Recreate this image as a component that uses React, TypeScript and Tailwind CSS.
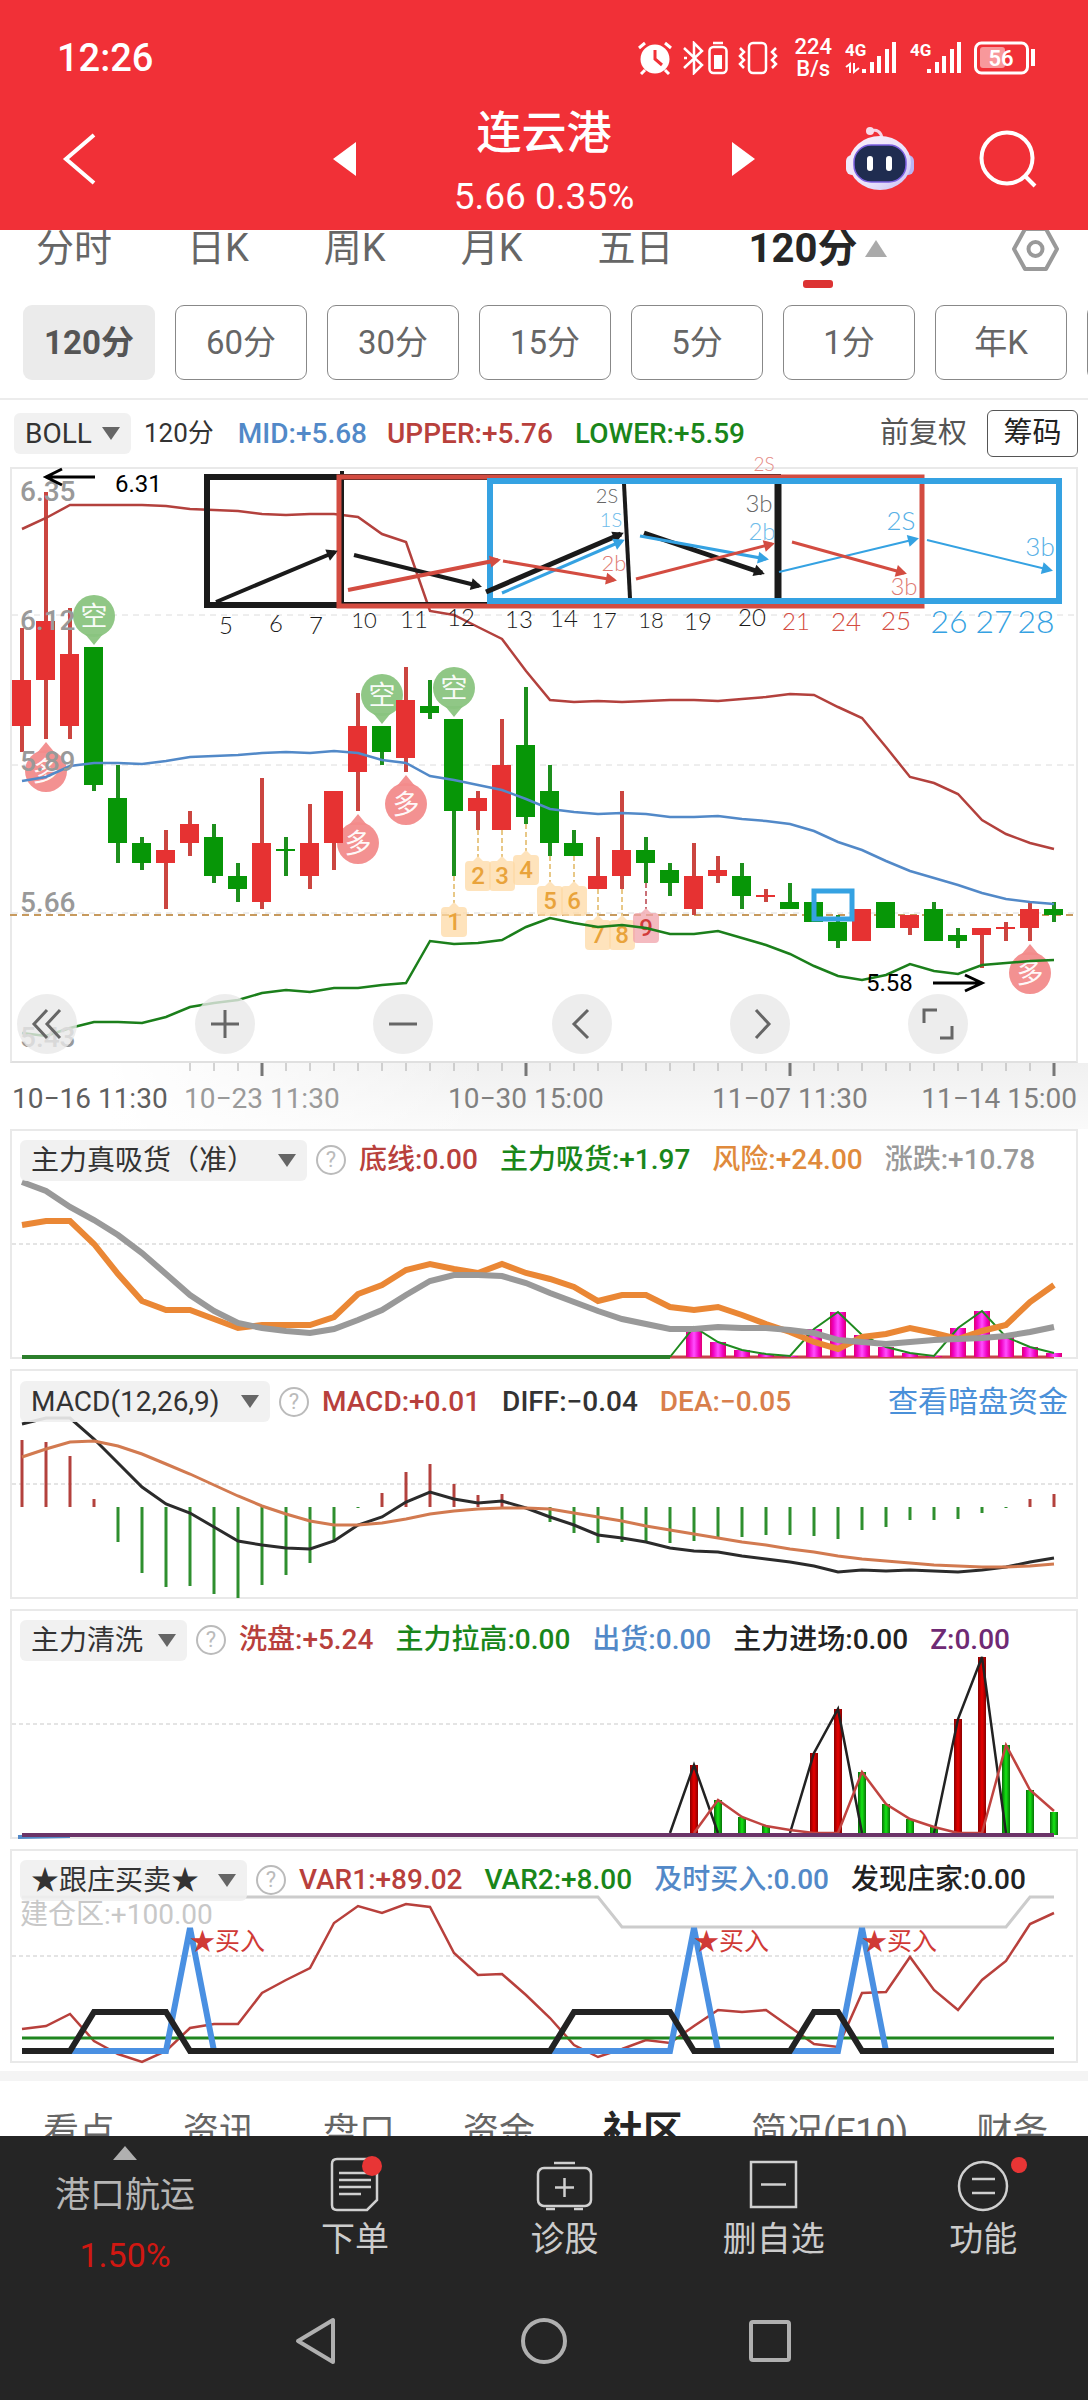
import React from "react";

const STEP = 24;
const FIRST_X = 22;
const toX = (i: number) => FIRST_X + i * STEP;
const line = (ys: number[], start = 0) => ys.map((y, i) => `${toX(i + start)},${y}`).join(" ");

// [direction, body top, body bottom, high, low]
type Candle = ["up" | "down", number, number, number, number];

const CANDLES: Candle[] = [
  ["up", 680, 726, 628, 752],
  ["up", 621, 680, 492, 739],
  ["up", 654, 726, 608, 739],
  ["down", 647, 785, 647, 791],
  ["down", 798, 843, 765, 863],
  ["down", 843, 863, 837, 870],
  ["up", 850, 863, 830, 909],
  ["up", 824, 843, 811, 856],
  ["down", 837, 876, 824, 883],
  ["down", 876, 889, 863, 902],
  ["up", 843, 902, 778, 909],
  ["down", 849, 851, 837, 876],
  ["up", 843, 876, 804, 889],
  ["up", 791, 843, 791, 870],
  ["up", 726, 772, 693, 811],
  ["down", 726, 752, 726, 765],
  ["up", 700, 758, 667, 772],
  ["down", 706, 713, 680, 719],
  ["down", 719, 811, 719, 876],
  ["up", 798, 811, 791, 830],
  ["up", 765, 830, 719, 830],
  ["down", 745, 817, 687, 824],
  ["down", 791, 843, 765, 856],
  ["down", 843, 856, 830, 856],
  ["up", 876, 889, 837, 889],
  ["up", 850, 876, 791, 889],
  ["down", 850, 863, 837, 883],
  ["down", 870, 883, 863, 896],
  ["up", 876, 909, 843, 915],
  ["up", 870, 876, 856, 883],
  ["down", 876, 896, 863, 909],
  ["up", 895, 897, 889, 902],
  ["down", 902, 909, 883, 909],
  ["down", 902, 922, 902, 922],
  ["down", 922, 941, 915, 948],
  ["up", 909, 941, 909, 941],
  ["down", 902, 928, 902, 928],
  ["up", 915, 928, 915, 935],
  ["down", 909, 941, 902, 941],
  ["down", 935, 941, 928, 948],
  ["up", 928, 935, 928, 968],
  ["up", 927, 929, 922, 941],
  ["up", 909, 928, 902, 941],
  ["down", 909, 915, 902, 922],
];

const UPPER = [529, 518, 505, 505, 505, 505, 506, 509, 510, 511, 514, 515, 514, 514, 517, 534, 542, 611, 615, 627, 639, 671, 700, 702, 701, 702, 701, 700, 700, 701, 699, 697, 694, 695, 707, 718, 747, 777, 783, 794, 820, 834, 843, 849];
const MID = [781, 777, 766, 763, 763, 764, 761, 757, 756, 755, 753, 752, 753, 751, 753, 760, 763, 776, 780, 785, 790, 799, 809, 812, 814, 813, 814, 817, 817, 816, 819, 821, 824, 831, 842, 850, 861, 871, 878, 885, 893, 899, 902, 904];
const LOWER = [1033, 1036, 1028, 1022, 1022, 1023, 1017, 1007, 1003, 1000, 993, 990, 992, 988, 988, 985, 983, 941, 944, 943, 940, 927, 918, 923, 927, 925, 928, 934, 934, 931, 938, 945, 954, 966, 976, 980, 975, 964, 971, 974, 965, 963, 961, 960];

const BEARS = [[94, 616], [382, 695], [454, 688]];
const BULLS = [[46, 771], [358, 843], [406, 804], [1030, 973]];

// [candle index, box top]
const COUNTS = [[18, 907], [19, 861], [20, 861], [21, 855], [22, 886], [23, 886], [24, 920], [25, 920], [26, 913]];

const TREND = [1182, 1191, 1207, 1220, 1235, 1253, 1274, 1295, 1311, 1323, 1328, 1331, 1333, 1329, 1320, 1310, 1295, 1281, 1275, 1275, 1276, 1283, 1293, 1302, 1311, 1319, 1324, 1329, 1329, 1327, 1328, 1328, 1330, 1333, 1340, 1342, 1344, 1342, 1340, 1339, 1338, 1336, 1332, 1327];
const RISK = [1225, 1221, 1221, 1244, 1274, 1301, 1310, 1310, 1319, 1328, 1325, 1325, 1325, 1317, 1294, 1285, 1270, 1264, 1269, 1273, 1264, 1273, 1279, 1287, 1301, 1295, 1295, 1307, 1310, 1307, 1315, 1324, 1332, 1342, 1349, 1337, 1334, 1328, 1333, 1339, 1331, 1325, 1302, 1285];
const INFLOW = [1357, 1327, 1342, 1350, 1354, 1356, 1329, 1312, 1335, 1347, 1353, 1356, 1328, 1311, 1337, 1347, 1353];

const MACD = [1440, 1442, 1456, 1499, 1542, 1573, 1587, 1586, 1594, 1598, 1585, 1575, 1563, 1542, 1508, 1493, 1472, 1464, 1484, 1495, 1494, 1507, 1522, 1533, 1543, 1542, 1543, 1543, 1541, 1537, 1537, 1535, 1535, 1536, 1539, 1530, 1527, 1520, 1520, 1519, 1513, 1508, 1499, 1494];
const DIFF = [1424, 1418, 1418, 1439, 1463, 1487, 1504, 1513, 1527, 1541, 1545, 1548, 1549, 1541, 1525, 1517, 1502, 1492, 1499, 1503, 1501, 1508, 1517, 1525, 1535, 1538, 1542, 1548, 1551, 1552, 1556, 1559, 1562, 1566, 1572, 1570, 1571, 1570, 1571, 1572, 1570, 1567, 1562, 1558];
const DEA = [1457, 1449, 1442, 1441, 1446, 1454, 1464, 1474, 1485, 1496, 1506, 1514, 1521, 1525, 1525, 1523, 1519, 1514, 1511, 1509, 1508, 1508, 1509, 1513, 1517, 1521, 1526, 1530, 1534, 1538, 1542, 1545, 1549, 1552, 1556, 1559, 1561, 1563, 1565, 1566, 1567, 1567, 1566, 1564];

const WASH_RED = [[28, 1765], [33, 1753], [34, 1709], [39, 1719], [40, 1657]];
const WASH_GREEN = [[29, 1800], [30, 1817], [31, 1826], [35, 1772], [36, 1804], [37, 1819], [38, 1827], [41, 1745], [42, 1790], [43, 1812]];

const VAR1 = [2029, 2026, 2014, 2041, 2054, 2062, 2051, 2028, 2024, 2024, 1993, 1980, 1968, 1923, 1906, 1913, 1904, 1907, 1953, 1975, 1974, 1995, 2018, 2045, 2057, 2049, 2040, 2043, 2026, 2010, 2012, 2010, 2027, 2044, 2047, 1993, 1992, 1957, 1990, 2010, 1980, 1961, 1924, 1913];
const DEALER = [0, 0, 0, 1, 1, 1, 1, 0, 0, 0, 0, 0, 0, 0, 0, 0, 0, 0, 0, 0, 0, 0, 0, 1, 1, 1, 1, 1, 0, 0, 0, 0, 0, 1, 1, 0, 0, 0, 0, 0, 0, 0, 0, 0].map((on) => (on ? 2012 : 2051));

function StatusBar() {
  return (
    <div className="flex h-[104px] items-center justify-between pt-3 pr-[52px] pl-[57px]">
      <span className="text-[38px] leading-none font-medium">12:26</span>
      <div className="flex items-center">
        <svg width="34" height="34" viewBox="0 0 34 34" fill="none" stroke="#fff" strokeWidth="3">
          <circle cx="17" cy="18" r="14.5" fill="#fff" stroke="none" />
          <path d="M1 7l6-5M33 7l-6-5M7 29l-4 4M27 29l4 4" />
          <path d="M17 9v9l7 6" stroke="#f13037" />
        </svg>
        <svg className="ml-[11px]" width="46" height="34" viewBox="0 0 46 34" fill="none" stroke="#fff" strokeWidth="2.5">
          <path d="M1 7l18 17-8 8V2l8 8L1 27M1 17h3" />
          <rect x="26.5" y="6" width="17" height="26" rx="4" />
          <path d="M30 2h10" />
          <rect x="31" y="14" width="8" height="14" fill="#fff" stroke="none" />
        </svg>
        <svg className="ml-[9px]" width="40" height="34" viewBox="0 0 40 34" fill="none" stroke="#fff" strokeWidth="2.5">
          <rect x="11" y="2" width="17" height="30" rx="4" />
          <path d="M2 7l4 4-4 4 4 4-4 4 4 4M38 7l-4 4 4 4-4 4 4 4-4 4" />
        </svg>
        <div className="ml-4 text-center text-[22px] leading-[22px] font-medium">
          <div>224</div>
          <div>B/s</div>
        </div>
        <SignalBars data />
        <SignalBars />
        <svg className="ml-[12px]" width="62" height="34" viewBox="0 0 62 34">
          <rect x="1.5" y="2" width="52" height="30" rx="6" fill="none" stroke="#fff" strokeWidth="3" />
          <rect x="6" y="6" width="25" height="21" rx="3" fill="#f8989b" />
          <path d="M59 8v17" stroke="#fff" strokeWidth="4" />
          <text x="27" y="25" textAnchor="middle" fontSize="22" fontWeight="600" fill="#fff">56</text>
        </svg>
      </div>
    </div>
  );
}

function SignalBars({ data = false }: { data?: boolean }) {
  return (
    <svg className="ml-[13px] first-of-type:ml-4" width="52" height="34" viewBox="0 0 52 34">
      <text x="0" y="15" fontSize="17" fontWeight="700" fill="#fff">4G</text>
      <path d="M19 28v4M27 21v11M34 15v17M42 8v24M49 1v31" stroke="#fff" strokeWidth="4" />
      {data && <path d="M1 26l4-3v9M9 22v9l5-4" stroke="#fff" strokeWidth="2" fill="none" />}
    </svg>
  );
}

function Robot() {
  return (
    <svg width="70" height="66" viewBox="0 0 70 66">
      <defs>
        <linearGradient id="shell" x1="0" y1="0" x2="1" y2="1">
          <stop offset="0" stopColor="#fbeef8" />
          <stop offset="0.6" stopColor="#e9e2fb" />
          <stop offset="1" stopColor="#c5bdf3" />
        </linearGradient>
      </defs>
      <path d="M26 5c6-2 10 1 11 7" fill="none" stroke="#f6d3e4" strokeWidth="3" />
      <circle cx="25" cy="5" r="4" fill="#f8dcea" />
      <rect x="1" y="29" width="12" height="20" rx="6" fill="#efe9fb" />
      <rect x="57" y="29" width="12" height="20" rx="6" fill="#b9b4f4" />
      <ellipse cx="35" cy="37" rx="31" ry="27" fill="url(#shell)" />
      <rect x="9" y="19" width="52" height="37" rx="17" fill="#1f2c50" stroke="#7c5fe0" strokeWidth="1.5" />
      <rect x="22" y="30" width="6" height="15" rx="3" fill="#fff" />
      <rect x="41" y="30" width="6" height="15" rx="3" fill="#fff" />
    </svg>
  );
}

function Header() {
  return (
    <header className="h-[230px] bg-[#f13037] text-white">
      <StatusBar />
      <div className="grid grid-cols-[1fr_422px_1fr] grid-rows-[110px] items-center">
        <button aria-label="返回" className="ml-[62px] w-10">
          <svg width="36" height="54" viewBox="0 0 36 54" fill="none" stroke="#fff" strokeWidth="4">
            <path d="M32 3L4 27l28 24" />
          </svg>
        </button>
        <div className="flex h-[110px] items-center justify-between">
          <button aria-label="上一只">
            <svg width="23" height="34" viewBox="0 0 23 34" fill="#fff">
              <path d="M0 17L23 0v34z" />
            </svg>
          </button>
          <div className="self-start text-center">
            <h1 className="text-[45px] leading-[60px] font-medium">连云港</h1>
            <p className="text-[37px] leading-[66px]">5.66 0.35%</p>
          </div>
          <button aria-label="下一只">
            <svg width="23" height="34" viewBox="0 0 23 34" fill="#fff">
              <path d="M23 17L0 0v34z" />
            </svg>
          </button>
        </div>
        <div className="flex items-center justify-end gap-16 pr-[50px]">
          <button aria-label="智能助手">
            <Robot />
          </button>
          <button aria-label="搜索">
            <svg width="59" height="58" viewBox="0 0 59 58" fill="none" stroke="#fff" strokeWidth="4">
              <circle cx="28" cy="28" r="25.5" />
              <path d="M46 46l10 10" />
            </svg>
          </button>
        </div>
      </div>
    </header>
  );
}

const PERIODS = ["分时", "日K", "周K", "月K", "五日"];
const MINUTES = ["120分", "60分", "30分", "15分", "5分", "1分", "年K", "多周期"];

function PeriodTabs() {
  return (
    <nav>
      <div className="flex h-[75px] items-start gap-[75px] overflow-hidden pr-[29px] pl-9 text-[38px] leading-[37px] text-[#666]">
        {PERIODS.map((name) => (
          <button key={name} className="shrink-0">{name}</button>
        ))}
        <button className="flex shrink-0 flex-col items-center text-[40px] font-bold text-[#262626]">
          <span className="flex items-center gap-2">
            120分
            <svg width="22" height="17" viewBox="0 0 22 17" fill="#aaa">
              <path d="M11 0l11 17H0z" />
            </svg>
          </span>
          <span className="mt-[13px] h-2 w-[30px] rounded-[3px] bg-[#dc3333]" />
        </button>
        <button aria-label="设置" className="ml-auto flex h-[37px] shrink-0 items-center">
          <svg width="47" height="44" viewBox="0 0 47 44" fill="none" stroke="#999" strokeWidth="4">
            <path d="M13 2h21l11 20-11 20H13L2 22z" strokeLinejoin="round" />
            <circle cx="23.5" cy="22" r="7" />
          </svg>
        </button>
      </div>
      <div className="flex gap-5 overflow-hidden border-b-2 border-[#ececec] pb-[18px] pl-[23px]">
        {MINUTES.map((name, i) => (
          <button
            key={name}
            className={
              i === 0
                ? "h-[75px] w-[132px] shrink-0 rounded-[9px] bg-[#ebebeb] text-[33px] font-bold text-[#555]"
                : "h-[75px] w-[132px] shrink-0 rounded-[9px] border border-[#888] text-[33px] text-[#666]"
            }
          >
            {name}
          </button>
        ))}
      </div>
    </nav>
  );
}

function Picker({ name, width }: { name: string; width: string }) {
  return (
    <label className="flex h-[41px] shrink-0 items-center gap-[10px] rounded-md bg-[#f0f0f0]/90 px-[11px] text-[28px] text-[#333]">
      <select aria-label="指标" className={`appearance-none bg-transparent leading-[41px] ${width}`}>
        <option>{name}</option>
      </select>
      <svg width="18" height="13" viewBox="0 0 18 13" fill="#666">
        <path d="M0 0h18L9 13z" />
      </svg>
    </label>
  );
}

function Help() {
  return (
    <button aria-label="说明" className="mr-[13px] ml-[9px] size-[30px] shrink-0 rounded-full border-2 border-[#bbb] text-[22px] leading-[26px] text-[#bbb]">
      ?
    </button>
  );
}

function Panel({
  top,
  height = 226,
  name,
  width,
  values,
  link,
  note,
  children,
}: {
  top: number;
  height?: number;
  name: string;
  width: string;
  values: [string, string][];
  link?: string;
  note?: string;
  children: React.ReactNode;
}) {
  return (
    <section className="mx-[10px] mb-[10px] grid border-2 border-[#e9e9e9] last-of-type:mb-2">
      <svg className="col-start-1 row-start-1 w-full overflow-visible" viewBox={`12 ${top} 1064 ${height}`} fill="none">
        <path d={`M12 ${top + height / 2}H1076`} stroke="#e4e4e4" strokeWidth="2" strokeDasharray="4 3" />
        {children}
      </svg>
      <div className="z-10 col-start-1 row-start-1 pt-2 pl-2 text-[28px]">
        <div className="flex items-center whitespace-nowrap">
          <Picker name={name} width={width} />
          <Help />
          <div className="flex gap-[22px] font-medium">
            {values.map(([text, color]) => (
              <span key={text} className={color}>{text}</span>
            ))}
          </div>
          {link && <a href="#funds" className="mr-[8px] ml-auto text-[30px] text-[#4a90d9]">{link}</a>}
        </div>
        {note && <p className="leading-7 text-[#c8c8c8]">{note}</p>}
      </div>
    </section>
  );
}

function Marker({ x, y, bull = false }: { x: number; y: number; bull?: boolean }) {
  return (
    <g transform={`translate(${x} ${y})`} fill={bull ? "#f28b8b" : "#8ac480"} fillOpacity="0.95">
      <circle r="21" />
      <path d={bull ? "M-9 -18L0 -29L9 -18z" : "M-9 18L0 29L9 18z"} />
      <text y="10" textAnchor="middle" fontSize="27" fill="#fff">{bull ? "多" : "空"}</text>
    </g>
  );
}

function Arrow({ d, color, width = 4 }: { d: [number, number, number, number]; color: string; width?: number }) {
  const [x1, y1, x2, y2] = d;
  const angle = (Math.atan2(y2 - y1, x2 - x1) * 180) / Math.PI;
  return (
    <g>
      <path d={`M${x1} ${y1}L${x2} ${y2}`} stroke={color} strokeWidth={width} />
      <path d="M3 0L-8 -6V6z" fill={color} transform={`translate(${x2} ${y2}) rotate(${angle})`} />
    </g>
  );
}

const INK = "#1a1a1a";
const RED = "#d34c41";
const BLUE = "#35a2e2";

const NOTES: [number, number, string, string, number][] = [
  [226, 634, "5", INK, 24],
  [276, 632, "6", INK, 24],
  [316, 634, "7", INK, 24],
  [364, 628, "10", INK, 22],
  [414, 628, "11", INK, 24],
  [461, 626, "12", INK, 24],
  [519, 628, "13", INK, 24],
  [564, 627, "14", INK, 24],
  [604, 628, "17", INK, 22],
  [651, 628, "18", INK, 22],
  [698, 630, "19", INK, 24],
  [752, 626, "20", INK, 24],
  [796, 630, "21", RED, 24],
  [846, 631, "24", RED, 26],
  [896, 630, "25", RED, 26],
  [949, 633, "26", BLUE, 32],
  [994, 633, "27", BLUE, 32],
  [1036, 633, "28", BLUE, 32],
  [764, 471, "2S", "#e58a85", 19],
  [607, 503, "2S", "#666", 20],
  [611, 527, "1S", "#6dbbea", 20],
  [614, 571, "2b", "#e07a72", 22],
  [759, 512, "3b", "#666", 24],
  [762, 540, "2b", "#6dbbea", 24],
  [901, 530, "2S", "#56b0e6", 26],
  [904, 595, "3b", "#e07a72", 24],
  [1040, 556, "3b", "#56b0e6", 26],
];

function Sketch() {
  return (
    <g>
      <path d="M207 477H778V605H207z" stroke={INK} strokeWidth="6" />
      <path d="M342 471V603" stroke={INK} strokeWidth="4" />
      <path d="M339 477H922V606H339z" stroke={RED} strokeWidth="5" />
      <path d="M490 481H1059V601H490z" stroke={BLUE} strokeWidth="6" />
      <path d="M624 484L630 598" stroke={INK} strokeWidth="4" />
      <path d="M778 484V598" stroke={INK} strokeWidth="7" />
      <Arrow d={[216, 602, 335, 552]} color={INK} />
      <Arrow d={[354, 555, 479, 586]} color={INK} />
      <Arrow d={[348, 590, 498, 560]} color={RED} />
      <Arrow d={[486, 592, 621, 534]} color={INK} width={5} />
      <Arrow d={[502, 593, 622, 541]} color={BLUE} width={3} />
      <Arrow d={[503, 561, 614, 580]} color={RED} width={3} />
      <Arrow d={[644, 533, 762, 573]} color={INK} width={5} />
      <Arrow d={[640, 536, 766, 559]} color={BLUE} width={3} />
      <Arrow d={[636, 579, 772, 544]} color={RED} width={3} />
      <Arrow d={[779, 572, 916, 539]} color={BLUE} width={2} />
      <Arrow d={[792, 542, 904, 573]} color={RED} width={3} />
      <Arrow d={[927, 540, 1050, 570]} color={BLUE} width={2} />
      <rect x="814" y="891" width="38" height="28" stroke={BLUE} strokeWidth="5" />
      <g className="font-['Lato'] font-light" textAnchor="middle">
        {NOTES.map(([x, y, text, color, size]) => (
          <text key={`${x}-${y}`} x={x} y={y} fontSize={size} fill={color}>{text}</text>
        ))}
      </g>
    </g>
  );
}

function PriceChart() {
  return (
    <svg className="block w-full overflow-visible" viewBox="12 469 1064 592" fill="none">
      <path d="M12 615H1076M12 765H1076M12 913H1076" stroke="#dcdcdc" strokeWidth="1" strokeDasharray="6 5" />
      <path d="M10 915H1078" stroke="#c79a5e" strokeWidth="2" strokeDasharray="7 5" />
      {BULLS.map(([x, y]) => <Marker key={x} x={x} y={y} bull />)}
      {BEARS.map(([x, y]) => <Marker key={x} x={x} y={y} />)}
      {COUNTS.map(([i, y], n) => (
        <path
          key={i}
          d={`M${toX(i)} ${CANDLES[i][4]}V${y - 4}`}
          stroke={n === 8 ? "#c96f76" : "#e8c887"}
          strokeWidth="2"
          strokeDasharray="5 3"
        />
      ))}
      {CANDLES.map(([dir, top, bottom, high, low], i) => (
        <g key={i} fill={dir === "up" ? "#e63232" : "#079607"}>
          <rect x={toX(i) - 2} y={high} width="4" height={low - high} fill={dir === "up" ? "#cb4540" : "#1d8f1d"} />
          <rect x={toX(i) - 10} y={top} width="19" height={bottom - top} />
        </g>
      ))}
      {COUNTS.map(([i, y], n) => (
        <g key={i} fill={n === 8 ? "#f0a3ab" : "#fdd9a5"} fillOpacity="0.75">
          <path d={`M${toX(i) - 13} ${y + 4}q0 -4 4 -4h4l5 -5l5 5h4q4 0 4 4v22q0 4 -4 4h-18q-4 0 -4 -4z`} />
          <text x={toX(i)} y={y + 23} textAnchor="middle" fontSize="24" fontWeight="500" fill={n === 8 ? "#d23b3b" : "#e9a33b"} fillOpacity="1">
            {n + 1}
          </text>
        </g>
      ))}
      <polyline points={line(UPPER)} stroke="#b3413d" strokeWidth="2.5" />
      <polyline points={line(MID)} stroke="#5289c8" strokeWidth="2.5" />
      <polyline points={line(LOWER)} stroke="#1b7f1b" strokeWidth="2.5" />
      <g fontSize="28" fontWeight="500" fill="#999">
        <text x="20" y="501">6.35</text>
        <text x="20" y="630">6.12</text>
        <text x="20" y="771">5.89</text>
        <text x="20" y="912">5.66</text>
        <text x="20" y="1047">5.43</text>
      </g>
      <g fontSize="24" fill="#000">
        <text x="115" y="492">6.31</text>
        <text x="866" y="991">5.58</text>
      </g>
      <path d="M95 477H46M62 469L46 477l16 8M933 983h49M965 975l17 8l-17 8" stroke="#000" strokeWidth="3" />
      <Sketch />
    </svg>
  );
}

const CHART_TOOLS: [string, string][] = [
  ["快退", "M30 16L17 30l13 14M43 16L30 30l13 14"],
  ["放大", "M30 16v28M16 30h28"],
  ["缩小", "M16 30h28"],
  ["左移", "M36 16L22 30l14 14"],
  ["右移", "M26 16l13 14l-13 14"],
  ["全屏", "M16 29V16h13M44 32v12H32"],
];

function ChartTools() {
  return (
    <div className="absolute right-[108px] bottom-[7px] left-[5px] flex justify-between">
      {CHART_TOOLS.map(([label, d]) => (
        <button key={label} aria-label={label} className="size-[60px] rounded-full bg-[#e9e9e9]/80">
          <svg width="60" height="60" viewBox="0 0 60 60" fill="none" stroke="#666" strokeWidth="3">
            <path d={d} />
          </svg>
        </button>
      ))}
    </div>
  );
}

function TimeAxis() {
  return (
    <div className="bg-linear-to-b from-[#f0f0f0] to-[#fafafa]">
      <div className="bg-linear-to-r from-white from-10% to-transparent to-45%">
        <svg className="block w-full" viewBox="0 1063 1088 66" fontSize="28">
          {CANDLES.map((_, i) => {
            const major = [10, 21, 32, 43].includes(i);
            return i < 7 ? null : (
              <path key={i} d={`M${toX(i)} 1063v${major ? 13 : 8}`} stroke={major ? "#777" : "#aaa"} strokeWidth={major ? 3 : 1} />
            );
          })}
          <text x="12" y="1108" fill="#5f5f5f">10−16 11:30</text>
          <g fill="#808080">
            <text x="184" y="1108" fill="#9a9a9a">10−23 11:30</text>
            <text x="448" y="1108">10−30 15:00</text>
            <text x="712" y="1108">11−07 11:30</text>
            <text x="1077" y="1108" textAnchor="end">11−14 15:00</text>
          </g>
        </svg>
      </div>
    </div>
  );
}

function MainChart() {
  return (
    <section>
      <div className="flex h-[67px] items-center pr-[10px] pl-[14px] text-[28px] whitespace-nowrap">
        <Picker name="BOLL" width="w-[67px]" />
        <span className="ml-[13px] text-[26px] text-[#333]">120分</span>
        <span className="ml-[24px] font-medium text-[#5289c8]">MID:+5.68</span>
        <span className="ml-[20px] font-medium text-[#b8403c]">UPPER:+5.76</span>
        <span className="ml-[22px] font-medium text-[#1a861a]">LOWER:+5.59</span>
        <button className="ml-auto text-[29px] text-[#555]">前复权</button>
        <button className="ml-[20px] h-[47px] w-[91px] rounded-md border border-[#555] text-[29px] leading-[45px] text-[#222]">筹码</button>
      </div>
      <div className="relative mx-[10px] border-2 border-[#e9e9e9] border-b-[#e0e0e0]">
        <PriceChart />
        <ChartTools />
      </div>
      <TimeAxis />
    </section>
  );
}

function SubCharts() {
  return (
    <div>
      <Panel
        top={1131}
        name="主力真吸货（准）"
        width="w-[237px]"
        values={[
          ["底线:0.00", "text-[#b8403c]"],
          ["主力吸货:+1.97", "text-[#1a861a]"],
          ["风险:+24.00", "text-[#e08a3c]"],
          ["涨跌:+10.78", "text-[#999]"],
        ]}
      >
        <defs>
          <linearGradient id="magenta">
            <stop offset="0" stopColor="#e00070" />
            <stop offset="0.2" stopColor="#f000c0" />
            <stop offset="0.5" stopColor="#ff4fff" />
            <stop offset="0.8" stopColor="#f000c0" />
            <stop offset="1" stopColor="#e00070" />
          </linearGradient>
        </defs>
        <path d="M22 1357H1054" stroke="#c8434a" strokeWidth="3" />
        {INFLOW.map((y, i) => (
          <rect key={i} x={toX(i + 27) - 8} y={y} width="16" height={1357 - y} fill="url(#magenta)" />
        ))}
        <path d="M22 1357H670" stroke="#2c7f2c" strokeWidth="4" />
        <polyline points={line(INFLOW, 27)} stroke="#1f8a1f" strokeWidth="2" />
        <polyline points={line(RISK)} stroke="#ea8735" strokeWidth="6" />
        <polyline points={line(TREND)} stroke="#999" strokeWidth="6" />
      </Panel>
      <Panel
        top={1371}
        name="MACD(12,26,9)"
        width="w-[200px]"
        values={[
          ["MACD:+0.01", "text-[#b8403c]"],
          ["DIFF:−0.04", "text-[#333]"],
          ["DEA:−0.05", "text-[#d97f4c]"],
        ]}
        link="查看暗盘资金"
      >
        {MACD.map((y, i) => (
          <path key={i} d={`M${toX(i)} 1507V${y}`} stroke={y < 1507 ? "#b3413d" : "#2f8f2f"} strokeWidth="3" />
        ))}
        <polyline points={line(DIFF)} stroke="#2b2b2b" strokeWidth="3" />
        <polyline points={line(DEA)} stroke="#d27a50" strokeWidth="3" />
      </Panel>
      <Panel
        top={1611}
        name="主力清洗"
        width="w-[117px]"
        values={[
          ["洗盘:+5.24", "text-[#b8403c]"],
          ["主力拉高:0.00", "text-[#1a861a]"],
          ["出货:0.00", "text-[#5289c8]"],
          ["主力进场:0.00", "text-[#222]"],
          ["Z:0.00", "text-[#6f2a74]"],
        ]}
      >
        <defs>
          <linearGradient id="barRed">
            <stop offset="0" stopColor="#8a0000" />
            <stop offset="0.5" stopColor="#e80000" />
            <stop offset="1" stopColor="#8a0000" />
          </linearGradient>
          <linearGradient id="barGreen">
            <stop offset="0" stopColor="#067006" />
            <stop offset="0.5" stopColor="#14e614" />
            <stop offset="1" stopColor="#067006" />
          </linearGradient>
        </defs>
        {WASH_RED.map(([i, y]) => (
          <rect key={i} x={toX(i) - 4} y={y} width="8" height={1835 - y} fill="url(#barRed)" />
        ))}
        {WASH_GREEN.map(([i, y]) => (
          <rect key={i} x={toX(i) - 4} y={y} width="8" height={1835 - y} fill="url(#barGreen)" />
        ))}
        <polyline points={line([1833, 1765, 1833], 27)} stroke="#222" strokeWidth="2.5" />
        <polyline points={line([1833, 1753, 1709, 1833], 32)} stroke="#222" strokeWidth="2.5" />
        <polyline points={line([1833, 1719, 1657, 1833], 38)} stroke="#222" strokeWidth="2.5" />
        <polyline points={line([1833, 1800, 1817, 1826, 1830, 1833, 1833, 1772, 1804, 1819, 1827, 1833, 1833, 1745, 1790, 1811], 28)} stroke="#c04440" strokeWidth="2.5" />
        <path d="M18 1837L70 1836" stroke="#5289c8" strokeWidth="4" />
        <path d="M22 1835H1054" stroke="#6b3468" strokeWidth="4" />
      </Panel>
      <Panel
        top={1851}
        height={210}
        name="★跟庄买卖★"
        width="w-[177px]"
        values={[
          ["VAR1:+89.02", "text-[#b8403c]"],
          ["VAR2:+8.00", "text-[#1a861a]"],
          ["及时买入:0.00", "text-[#5289c8]"],
          ["发现庄家:0.00", "text-[#222]"],
        ]}
        note="建仓区:+100.00"
      >
        <path d="M22 1897H598L622 1927H1006L1030 1897H1054" stroke="#ccc" strokeWidth="3" />
        <polyline points={line(VAR1)} stroke="#b8403c" strokeWidth="2.5" />
        <path d="M22 2038H1054" stroke="#1f861f" strokeWidth="3" />
        <g stroke="#4a90e2" strokeWidth="6">
          <path d="M70 2051H166L190 1928L214 2051" />
          <path d="M550 2051H670L694 1928L718 2051" />
          <path d="M790 2051H838L862 1928L886 2051" />
        </g>
        <polyline points={line(DEALER)} stroke="#222" strokeWidth="6" />
        <g fontSize="25" fill="#d03a36">
          <text x="190" y="1950">★买入</text>
          <text x="694" y="1950">★买入</text>
          <text x="862" y="1950">★买入</text>
        </g>
      </Panel>
    </div>
  );
}

function InfoTabs() {
  return (
    <nav className="flex h-[65px] gap-[68px] overflow-hidden border-t-[10px] border-[#f4f4f4] pl-[43px] text-[36px] leading-[102px] whitespace-nowrap text-[#666]">
      <button className="shrink-0">看点</button>
      <button className="shrink-0">资讯</button>
      <button className="shrink-0">盘口</button>
      <button className="shrink-0">资金</button>
      <button className="shrink-0 text-[40px] font-bold text-[#262626]">社区</button>
      <button className="shrink-0">简况(F10)</button>
      <button className="shrink-0">财务</button>
    </nav>
  );
}

const ACTIONS = [
  {
    label: "下单",
    icon: (
      <>
        <path d="M11 4h36q4 0 4 4v37l-10 10H11q-5 0-5-5V9q0-5 5-5z" />
        <path d="M13 18h32M13 25h32M13 32h32M13 39h22" />
        <circle cx="46" cy="11" r="10" fill="#e83535" stroke="none" />
      </>
    ),
  },
  {
    label: "诊股",
    icon: (
      <>
        <path d="M18 8h21" />
        <rect x="2" y="13" width="53" height="38" rx="6" />
        <path d="M28.5 23v19M19 32.5h19M10 54h9M38 54h9" />
      </>
    ),
  },
  {
    label: "删自选",
    icon: (
      <>
        <rect x="6" y="7" width="45" height="45" />
        <path d="M16 29.5h25" />
      </>
    ),
  },
  {
    label: "功能",
    icon: (
      <>
        <circle cx="28" cy="31" r="24" />
        <path d="M17 24h23M17 38h23" />
        <circle cx="64" cy="10" r="8" fill="#e83535" stroke="none" />
      </>
    ),
  },
];

function BottomBar() {
  return (
    <footer className="flex h-[264px] flex-col bg-[#252525] text-[#ccc]">
      <div className="flex h-[146px]">
        <button className="flex w-[23%] flex-col items-center pt-[10px] text-[35px] text-[#b5b5b5]">
          <svg width="24" height="14" viewBox="0 0 24 14" fill="#b0b0b0">
            <path d="M12 0l12 14H0z" />
          </svg>
          <span className="mt-[10px] leading-[52px]">港口航运</span>
          <span className="mt-[7px] text-[34px] leading-[52px] text-[#d01812]">1.50%</span>
        </button>
        {ACTIONS.map(({ label, icon }) => (
          <button key={label} className="flex flex-1 flex-col items-center pt-[19px] text-[34px]">
            <svg className="overflow-visible" width="57" height="58" viewBox="0 0 57 58" fill="none" stroke="#d0d0d0" strokeWidth="2.5">
              {icon}
            </svg>
            <span className="leading-[52px]">{label}</span>
          </button>
        ))}
      </div>
      <div className="flex flex-1 justify-center gap-[179px] pt-[35px]">
        <button aria-label="系统返回" className="size-12">
          <svg width="48" height="48" viewBox="0 0 48 48" fill="none" stroke="#b0b0b0" strokeWidth="4" strokeLinejoin="round">
            <path d="M40 3v42L5 24z" />
          </svg>
        </button>
        <button aria-label="主屏幕" className="size-12">
          <svg width="48" height="48" viewBox="0 0 48 48" fill="none" stroke="#b0b0b0" strokeWidth="4">
            <circle cx="24" cy="24" r="21" />
          </svg>
        </button>
        <button aria-label="最近任务" className="size-12">
          <svg width="48" height="48" viewBox="0 0 48 48" fill="none" stroke="#b0b0b0" strokeWidth="4">
            <rect x="4" y="5" width="38" height="38" rx="2" />
          </svg>
        </button>
      </div>
    </footer>
  );
}

export default function App() {
  return (
    <div className="overflow-x-hidden bg-white font-['Roboto','Noto_Sans_CJK_SC',sans-serif]">
      <Header />
      <PeriodTabs />
      <MainChart />
      <SubCharts />
      <InfoTabs />
      <BottomBar />
    </div>
  );
}
